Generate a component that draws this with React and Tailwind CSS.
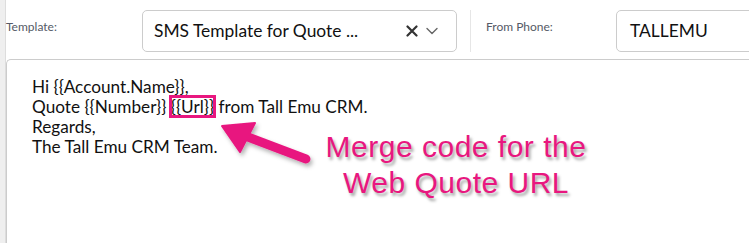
import React from "react";

export default function App() {
  return (
    <div className="relative flex w-[749px] h-[243px] overflow-hidden bg-white font-['Lato',sans-serif]">
      <div className="w-[6px] shrink-0 bg-[#efefef] border-r border-[#dddddd]" />
      <div className="flex flex-1 flex-col">
        <div className="flex h-[59px] items-start pt-[10px]">
          <div className="w-[136px] shrink-0 pt-[9px] text-[12px] leading-[16px] text-[#555a66]">Template:</div>
          <div className="flex h-[42px] w-[315px] shrink-0 items-center rounded-[5px] border border-[#cccccc] pl-[11px] pr-[18px]">
            <span className="flex-1 text-[17.4px] text-[#111111]">SMS Template for Quote ...</span>
            <svg width="12" height="12" viewBox="0 0 12 12" className="mr-[8px]">
              <path d="M1.5 1.5 L10.5 10.5 M10.5 1.5 L1.5 10.5" stroke="#333" strokeWidth="2.2" strokeLinecap="round" />
            </svg>
            <svg width="12" height="8" viewBox="0 0 12 8">
              <path d="M1 1.5 L6 6.5 L11 1.5" stroke="#666" strokeWidth="1.4" fill="none" strokeLinecap="round" strokeLinejoin="round" />
            </svg>
          </div>
          <div className="ml-[13px] h-[42px] w-px shrink-0 bg-[#e6e6e6]" />
          <div className="ml-[15px] w-[130px] shrink-0 pt-[9px] text-[12px] leading-[16px] text-[#555a66]">From Phone:</div>
          <div className="flex h-[42px] w-[160px] shrink-0 items-center rounded-[5px] border border-[#cccccc] pl-[13px] text-[17.4px] text-[#111111]">
            TALLEMU
          </div>
        </div>
        <div className="flex-1 rounded-tl-[5px] border-l border-t border-[#cccccc] pl-[25px] pt-[17px] text-[17.2px] leading-[20px] text-[#111111]">
          <div>Hi {"{{Account.Name}},"}</div>
          <div>
            Quote {"{{Number}}"}{" "}
            <span className="relative">
              {"{{Url}}"}
              <span className="absolute -left-[2px] -right-[2px] -top-[1px] -bottom-[1px] border-[3px] border-[#e8177f]" />
            </span>{" "}
            from Tall Emu CRM.
          </div>
          <div>Regards,</div>
          <div>The Tall Emu CRM Team.</div>
        </div>
      </div>

      <svg className="pointer-events-none absolute left-0 top-0" width="749" height="243" viewBox="0 0 749 243">
        <defs>
          <filter id="sh" x="-20%" y="-20%" width="140%" height="160%">
            <feDropShadow dx="2" dy="3" stdDeviation="2" floodColor="#000" floodOpacity="0.3" />
          </filter>
        </defs>
        <g filter="url(#sh)">
          <line x1="240" y1="134" x2="306" y2="159" stroke="#e8177f" strokeWidth="9" strokeLinecap="round" />
          <path d="M222 126 L255 123 L240 152 Z" fill="#e8177f" stroke="#e8177f" strokeWidth="2" strokeLinejoin="round" />
        </g>
      </svg>

      <div className="pointer-events-none absolute left-[300px] top-[129px] w-[312px] text-center font-['Liberation_Sans',Arial,sans-serif] text-[30px] leading-[36px] tracking-[0.5px] text-[#e8177f] [text-shadow:2px_3px_3px_rgba(0,0,0,0.35)]">
        <div>Merge code for the</div>
        <div>Web Quote URL</div>
      </div>
    </div>
  );
}
